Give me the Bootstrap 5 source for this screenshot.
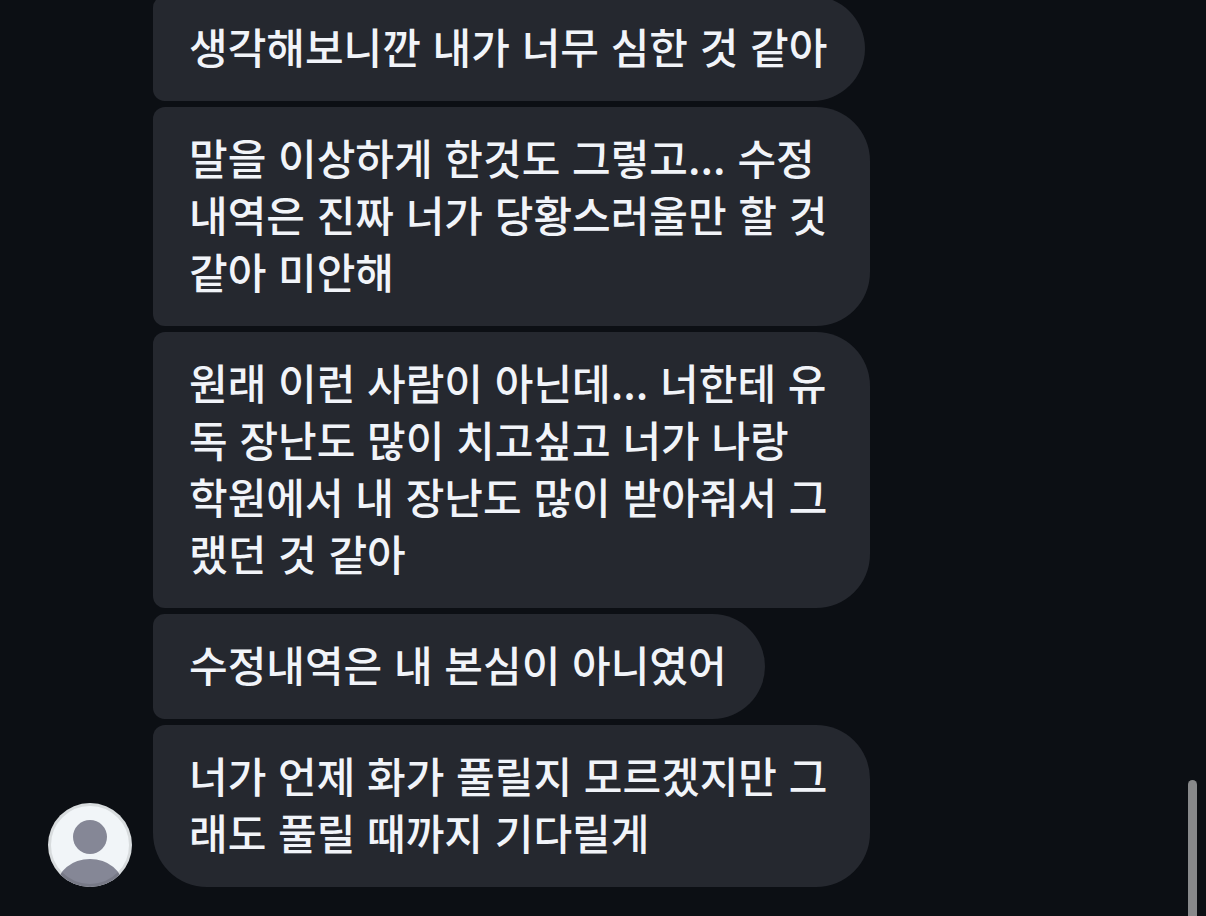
<!DOCTYPE html>
<html lang="ko">
<head>
<meta charset="utf-8">
<meta name="viewport" content="width=device-width, initial-scale=1">
<title>채팅</title>
<link href="https://cdn.jsdelivr.net/npm/bootstrap@5.3.0/dist/css/bootstrap.min.css" rel="stylesheet">
<style>
body { background: #0c0f14; color: #f1f4f9; font-family: "Noto Sans CJK KR", sans-serif; overflow: hidden; }
.chat { padding: 0 48px 29px; gap: 21px; }
.avatar { width: 84px; height: 84px; }
.messages { gap: 6px; max-width: 717px; }
.bubble { background: #25282f; padding: 21px 38px 27px 36px; border-radius: 12px 54px 54px 12px; font-size: 42px; line-height: 57px; font-weight: 500; }
.bubble-last { border-bottom-left-radius: 54px; }
.scroll-thumb { right: 9px; bottom: 0; width: 9px; height: 136px; background: #88898b; border-radius: 5px 5px 0 0; }
</style>
</head>
<body>
<main class="chat vh-100 d-flex align-items-end">
  <svg class="avatar flex-shrink-0" viewBox="0 0 84 84" role="img" aria-label="프로필">
    <defs><clipPath id="face"><circle cx="42" cy="42" r="42"/></clipPath></defs>
    <g clip-path="url(#face)"><rect width="84" height="84" fill="#f1f5f8"/><circle cx="42" cy="34" r="17" fill="#858796"/><ellipse cx="42" cy="83" rx="33" ry="27" fill="#858796"/></g>
    <circle cx="42" cy="42" r="40.5" fill="none" stroke="#000" stroke-opacity=".1" stroke-width="3"/>
  </svg>
  <div class="messages d-flex flex-column align-items-start">
    <div class="bubble">생각해보니깐 내가 너무 심한 것 같아</div>
    <div class="bubble">말을 이상하게 한것도 그렇고... 수정내역은 진짜 너가 당황스러울만 할 것 같아 미안해</div>
    <div class="bubble">원래 이런 사람이 아닌데... 너한테 유독 장난도 많이 치고싶고 너가 나랑 학원에서 내 장난도 많이 받아줘서 그랬던 것 같아</div>
    <div class="bubble">수정내역은 내 본심이 아니였어</div>
    <div class="bubble bubble-last">너가 언제 화가 풀릴지 모르겠지만 그래도 풀릴 때까지 기다릴게</div>
  </div>
</main>
<div class="scroll-thumb position-fixed"></div>
<script src="https://cdn.jsdelivr.net/npm/bootstrap@5.3.0/dist/js/bootstrap.bundle.min.js"></script>
</body>
</html>
